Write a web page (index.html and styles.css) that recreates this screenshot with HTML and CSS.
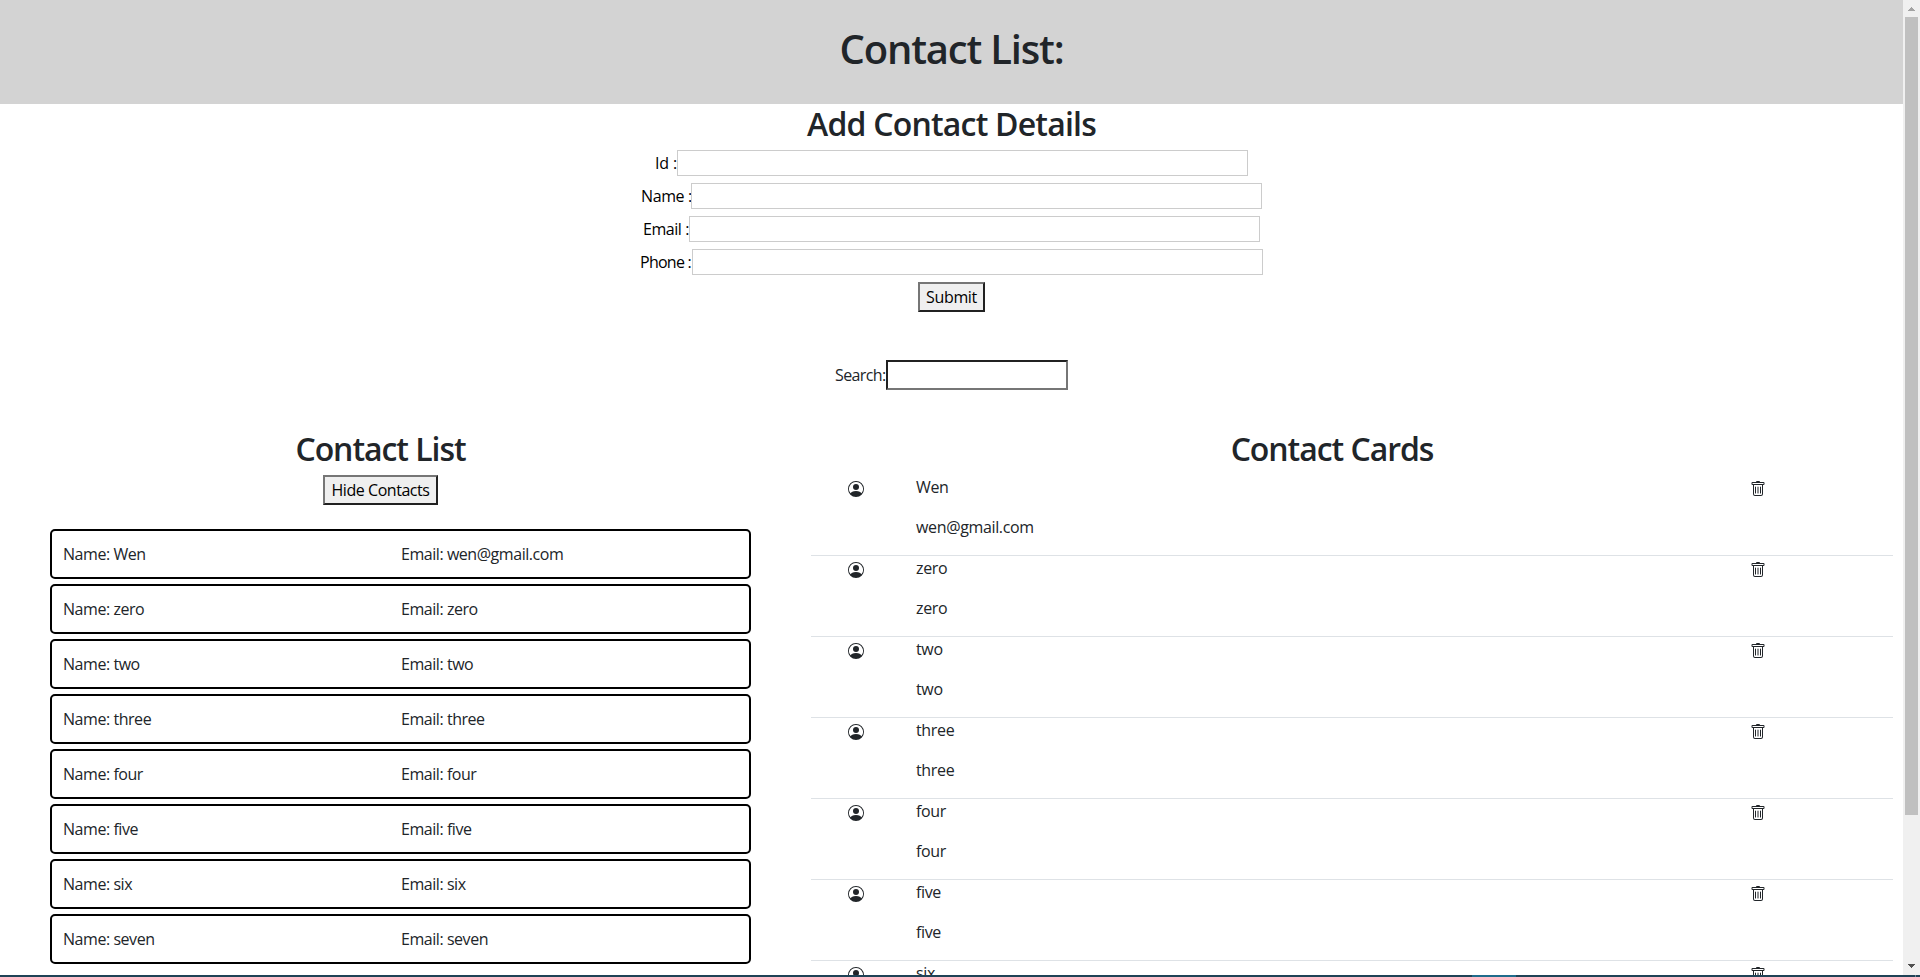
FILE: index.html
```html
<!DOCTYPE html>
<html lang="en">
<head>
<meta charset="utf-8">
<title>Contact List</title>
<link rel="stylesheet" href="styles.css">
</head>
<body>
<svg class="defs" width="0" height="0">
  <symbol id="person" viewBox="0 0 16 16"><path d="M11 6a3 3 0 1 1-6 0 3 3 0 0 1 6 0z"/><path fill-rule="evenodd" d="M0 8a8 8 0 1 1 16 0A8 8 0 0 1 0 8zm8-7a7 7 0 0 0-5.468 11.37C3.242 11.226 4.805 10 8 10s4.757 1.225 5.468 2.37A7 7 0 0 0 8 1z"/></symbol>
  <symbol id="trash" viewBox="0 0 16 16"><path d="M5.5 5.5A.5.5 0 0 1 6 6v6a.5.5 0 0 1-1 0V6a.5.5 0 0 1 .5-.5zm2.5 0a.5.5 0 0 1 .5.5v6a.5.5 0 0 1-1 0V6a.5.5 0 0 1 .5-.5zm3 .5a.5.5 0 0 0-1 0v6a.5.5 0 0 0 1 0V6z"/><path fill-rule="evenodd" d="M14.5 3a1 1 0 0 1-1 1H13v9a2 2 0 0 1-2 2H5a2 2 0 0 1-2-2V4h-.5a1 1 0 0 1-1-1V2a1 1 0 0 1 1-1H6a1 1 0 0 1 1-1h2a1 1 0 0 1 1 1h3.5a1 1 0 0 1 1 1v1zM4.118 4 4 4.059V13a1 1 0 0 0 1 1h6a1 1 0 0 0 1-1V4.059L11.882 4H4.118zM2.500 3V2h11v1h-11z"/></symbol>
</svg>
<div class="window">
  <main class="page">
    <header class="banner"><h1>Contact List:</h1></header>
    <section class="form">
      <h2>Add Contact Details</h2>
      <div class="field"><label class="l-id" for="i">Id :</label><input id="i"></div>
      <div class="field"><label class="l-name" for="n">Name :</label><input id="n"></div>
      <div class="field"><label class="l-email" for="e">Email :</label><input id="e"></div>
      <div class="field"><label class="l-phone" for="p">Phone :</label><input id="p"></div>
      <button class="submit">Submit</button>
    </section>
    <div class="search"><label for="s">Search:</label><input id="s"></div>
    <div class="columns">
      <section class="list">
        <h2>Contact List</h2>
        <button class="hide">Hide Contacts</button>
        <ul>
          <li><span>Name: Wen</span><span>Email: wen@gmail.com</span></li>
          <li><span>Name: zero</span><span>Email: zero</span></li>
          <li><span>Name: two</span><span>Email: two</span></li>
          <li><span>Name: three</span><span>Email: three</span></li>
          <li><span>Name: four</span><span>Email: four</span></li>
          <li><span>Name: five</span><span>Email: five</span></li>
          <li><span>Name: six</span><span>Email: six</span></li>
          <li><span>Name: seven</span><span>Email: seven</span></li>
        </ul>
      </section>
      <section class="cards">
        <h2>Contact Cards</h2>
        <div class="card"><svg><use href="#person"/></svg><div><p>Wen</p><p>wen@gmail.com</p></div><svg><use href="#trash"/></svg></div>
        <div class="card"><svg><use href="#person"/></svg><div><p>zero</p><p>zero</p></div><svg><use href="#trash"/></svg></div>
        <div class="card"><svg><use href="#person"/></svg><div><p>two</p><p>two</p></div><svg><use href="#trash"/></svg></div>
        <div class="card"><svg><use href="#person"/></svg><div><p>three</p><p>three</p></div><svg><use href="#trash"/></svg></div>
        <div class="card"><svg><use href="#person"/></svg><div><p>four</p><p>four</p></div><svg><use href="#trash"/></svg></div>
        <div class="card"><svg><use href="#person"/></svg><div><p>five</p><p>five</p></div><svg><use href="#trash"/></svg></div>
        <div class="card"><svg><use href="#person"/></svg><div><p>six</p></div><svg><use href="#trash"/></svg></div>
      </section>
    </div>
  </main>
  <aside class="scrollbar">
    <svg width="17" height="17"><path fill="#a3a3a3" d="M5 11h7v-1h-1v-1h-1v-1h-1v-1h-1v1h-1v1h-1v1h-1z"/></svg>
    <div class="thumb"></div>
    <svg width="17" height="17"><path fill="#505050" d="M5 6h7v1h-1v1h-1v1h-1v1h-1v-1h-1v-1h-1v-1h-1z"/></svg>
  </aside>
</div>
<footer class="taskbar"><i class="active"></i><i class="peek"></i></footer>
</body>
</html>
```
FILE: styles.css
```css
* { box-sizing: border-box; }
body {
  margin: 0;
  height: 977px;
  overflow: hidden;
  display: flex;
  flex-direction: column;
  background: #fff;
  color: #212529;
  font: 400 16px/24px "Segoe UI", "Open Sans", sans-serif;
  letter-spacing: -0.35px;
}
.defs { display: none; }
.window { display: flex; height: 975px; }
.page { width: 1903px; height: 975px; overflow: hidden; }
h1, h2 { margin: 0 0 8px; font-weight: 600; text-align: center; }
h1 { padding-top: 1px; font-size: 40px; line-height: 48px; letter-spacing: -1.2px; }
h2 { height: 38.4px; padding-top: 1px; font-size: 32px; line-height: 38.4px; letter-spacing: -1.05px; }
p { margin: 0 0 16px; }
.banner { height: 104px; padding: 24px 0; background: #d3d3d3; }

.form { height: 256px; display: flex; flex-direction: column; align-items: center; }
.form h2 { margin-bottom: 7.6px; letter-spacing: -0.8px; }
.field { display: flex; justify-content: center; height: 26px; margin-bottom: 7px; color: #000; }
.field label { line-height: 26px; white-space: nowrap; }
.field input { width: 571px; height: 26px; border: 1px solid #ccc; padding: 0; }
.l-id { width: 22px; letter-spacing: -0.1px; }
.l-name { width: 50px; letter-spacing: -0.4px; }
.l-email { width: 46px; letter-spacing: -0.45px; }
.l-phone { width: 52px; letter-spacing: -0.75px; }

button {
  display: block;
  height: 30px;
  padding: 0;
  border: 2px solid;
  border-color: #767676 #212121 #212121 #767676;
  background: #efefef;
  color: #000;
  font: inherit;
  letter-spacing: inherit;
}
.submit { width: 67px; }
.hide { width: 115px; margin: 0 auto; letter-spacing: -0.45px; }

.search { display: flex; justify-content: center; height: 69px; line-height: 30px; }
.search label { width: 51px; letter-spacing: -0.6px; }
.search input {
  width: 182px;
  height: 30px;
  border: 2px solid;
  border-color: #212121 #767676 #767676 #212121;
}

.columns { display: flex; }
.columns h2 { margin-bottom: 7.6px; }
.list { width: 761px; }
.list ul { margin: 24px 10px 0 50px; padding: 0; list-style: none; letter-spacing: -0.45px; }
.list li {
  display: grid;
  grid-template-columns: 338px 1fr;
  height: 50px;
  margin-bottom: 5px;
  padding: 11px;
  border: 2px solid #000;
  border-radius: 5px;
}
.cards { width: 1082px; margin-left: 50px; margin-right: 10px; }
.cards h2 { padding-right: 40px; }
.card {
  display: grid;
  grid-template-columns: 90px 812px 90px;
  height: 81px;
  border-bottom: 1px solid #dee2e6;
}
.card > div { padding-left: 15px; }
.card svg { width: 16px; height: 16px; margin: 6px auto 0; fill: #212529; }

.scrollbar { width: 17px; height: 975px; display: flex; flex-direction: column; background: #f0f0f0; }
.scrollbar svg { display: block; }
.thumb { width: 13px; height: 798px; margin: 0 2px 143px; background: #c0c0c0; }

.taskbar { height: 2px; display: flex; background: #1f4256; }
.active { width: 44px; margin-left: 1472px; background: #1f6b8b; }
.peek { width: 1px; margin-left: 399px; background: #6d8593; }
```
